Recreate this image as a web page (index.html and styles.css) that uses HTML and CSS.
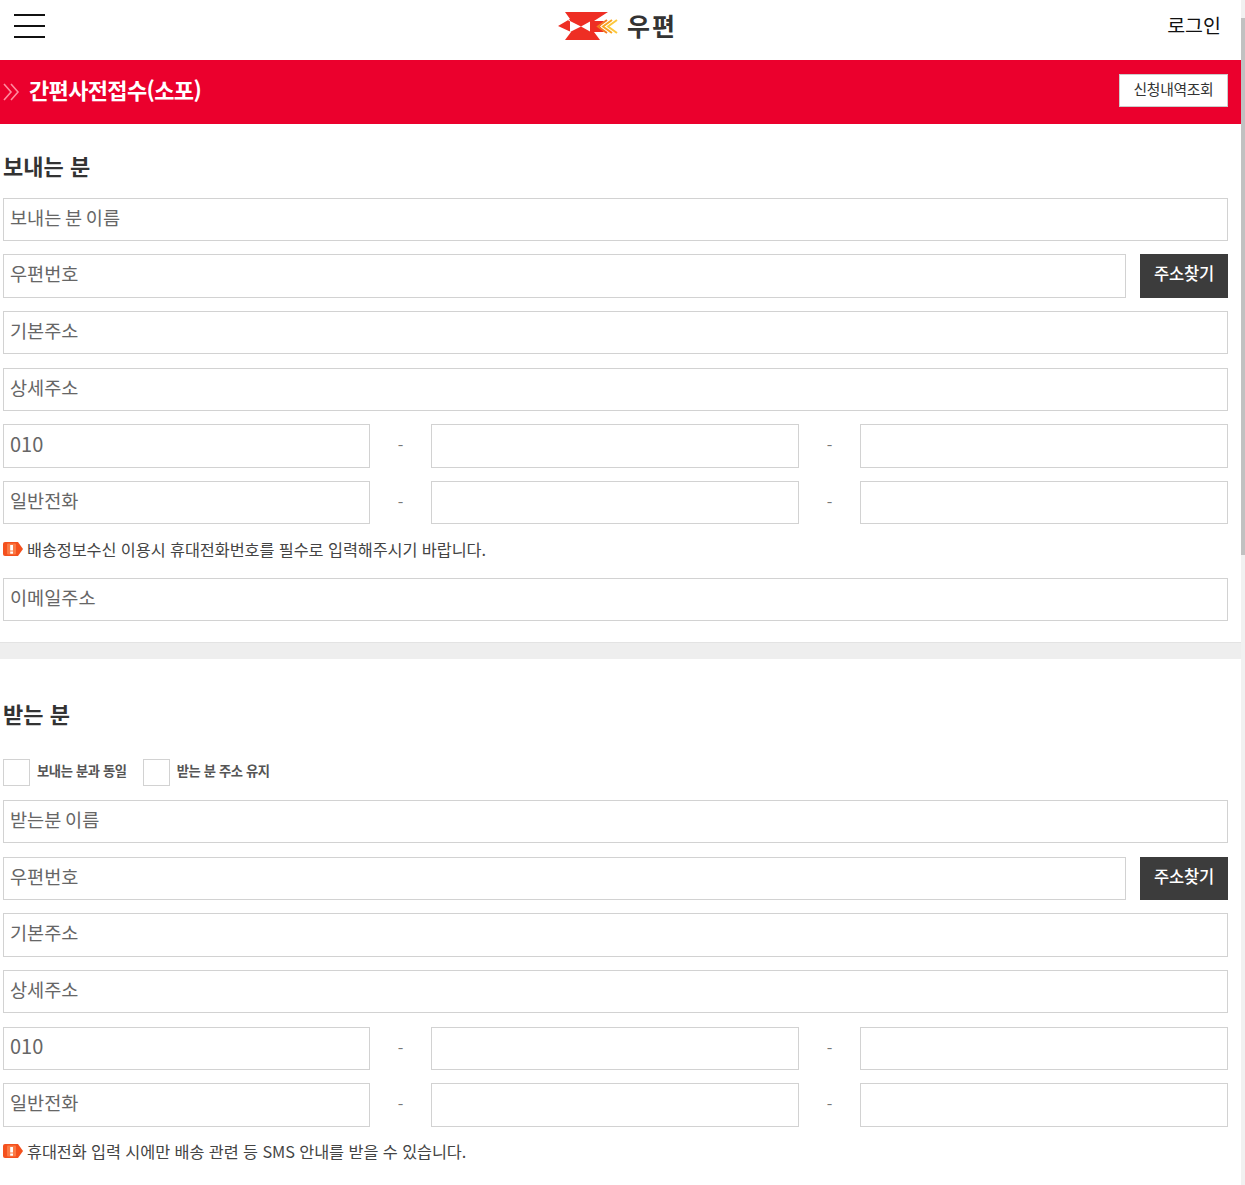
FILE: index.html
```html
<!DOCTYPE html>
<html lang="ko">
<head>
<meta charset="utf-8">
<title>간편사전접수(소포)</title>
<link rel="stylesheet" href="styles.css">
</head>
<body>
<div class="page">
  <header class="top">
    <div class="burger"><span></span><span></span><span></span></div>
    <div class="logo">
      <svg width="62" height="30" viewBox="0 0 62 30">
        <path d="M8 1 H51 L37 10 H47 L43 15.500 L47 21 H37 L43 29 H8 L14 21 L1 15 L13 8 Z" fill="#ee2e24"/>
        <path d="M13 10 L24 15.500 L13 21 Z M24 15.500 L33 10.500 V20.500 Z" fill="#fff"/>
        <path d="M7 6 L13 10 M7 24 L13 21" stroke="#fff" stroke-width="1"/>
        <path d="M50 9 L41 15.500 L50 22" fill="none" stroke="#f47b20" stroke-width="2"/>
        <path d="M55 9 L46 15.500 L55 22" fill="none" stroke="#f9a51f" stroke-width="2"/>
        <path d="M60 9 L51 15.500 L60 22" fill="none" stroke="#fcc83c" stroke-width="2"/>
      </svg>
      <span class="logo-text">우편</span>
    </div>
    <a class="login">로그인</a>
  </header>

  <div class="banner">
    <div class="banner-title">
      <svg class="chev" width="17" height="18" viewBox="0 0 17 18"><path d="M1 1 L8 9 L1 17 M8 1 L15 9 L8 17" fill="none" stroke="#ff8a9e" stroke-width="1.6"/></svg>
      <h1>간편사전접수(소포)</h1>
    </div>
    <a class="history">신청내역조회</a>
  </div>

  <section class="sect sender">
    <h2>보내는 분</h2>
    <div class="form">
      <input class="field" placeholder="보내는 분 이름">
      <div class="addr"><input class="field" placeholder="우편번호"><button class="find">주소찾기</button></div>
      <input class="field" placeholder="기본주소">
      <input class="field" placeholder="상세주소">
      <div class="tel"><input class="field num" value="010"><span class="dash">-</span><input class="field"><span class="dash">-</span><input class="field"></div>
      <div class="tel"><input class="field" placeholder="일반전화"><span class="dash">-</span><input class="field"><span class="dash">-</span><input class="field"></div>
      <p class="note">
        <svg width="20" height="16" viewBox="0 0 20 16"><path d="M2 1 H15 L20 8 L15 15 H2 Q0 15 0 13 V3 Q0 1 2 1 Z" fill="#f4511e"/><rect x="4" y="2.500" width="9" height="11" rx="1" fill="#fb7a45"/><rect x="7.200" y="4" width="2.800" height="5.500" fill="#fff"/><rect x="7.200" y="10.500" width="2.800" height="2.200" fill="#fff"/></svg>
        배송정보수신 이용시 휴대전화번호를 필수로 입력해주시기 바랍니다.
      </p>
      <input class="field" placeholder="이메일주소">
    </div>
  </section>

  <div class="band"></div>

  <section class="sect receiver">
    <h2>받는 분</h2>
    <div class="checks">
      <label class="check"><span class="box"></span>보내는 분과 동일</label>
      <label class="check"><span class="box"></span>받는 분 주소 유지</label>
    </div>
    <div class="form">
      <input class="field" placeholder="받는분 이름">
      <div class="addr"><input class="field" placeholder="우편번호"><button class="find">주소찾기</button></div>
      <input class="field" placeholder="기본주소">
      <input class="field" placeholder="상세주소">
      <div class="tel"><input class="field num" value="010"><span class="dash">-</span><input class="field"><span class="dash">-</span><input class="field"></div>
      <div class="tel"><input class="field" placeholder="일반전화"><span class="dash">-</span><input class="field"><span class="dash">-</span><input class="field"></div>
      <p class="note">
        <svg width="20" height="16" viewBox="0 0 20 16"><path d="M2 1 H15 L20 8 L15 15 H2 Q0 15 0 13 V3 Q0 1 2 1 Z" fill="#f4511e"/><rect x="4" y="2.500" width="9" height="11" rx="1" fill="#fb7a45"/><rect x="7.200" y="4" width="2.800" height="5.500" fill="#fff"/><rect x="7.200" y="10.500" width="2.800" height="2.200" fill="#fff"/></svg>
        휴대전화 입력 시에만 배송 관련 등 SMS 안내를 받을 수 있습니다.
      </p>
    </div>
  </section>
</div>
<div class="scrollbar"><div class="thumb"></div></div>
</body>
</html>
```

FILE: styles.css
```css
* { box-sizing: border-box; }
html, body { margin: 0; padding: 0; height: 100%; overflow: hidden; background: #fff; }
body { font-family: "Noto Sans CJK KR", "Noto Sans", sans-serif; color: #444; }
.page { width: 1241px; }

.top { height: 60px; display: flex; align-items: center; justify-content: space-between; position: relative; padding: 0 20px 8px 14px; }
.burger { width: 31px; height: 24px; display: flex; flex-direction: column; justify-content: space-between; }
.burger span { display: block; height: 2px; background: #111; }
.logo { position: absolute; left: 557px; top: 11px; display: flex; align-items: center; gap: 8px; }
.logo-text { font-size: 25px; font-weight: 700; color: #333; line-height: 30px; letter-spacing: 2px; margin-top: -2px; }
.login { font-size: 19.5px; color: #111; line-height: 26px; margin-top: -3px; }

.banner { height: 64px; background: #eb002d; display: flex; align-items: center; justify-content: space-between; padding: 0 13px 4px 3px; }
.banner-title { display: flex; align-items: center; gap: 9px; }
.chev { margin-top: 3px; }
.banner-title h1 { margin: -2px 0 0; font-size: 22px; font-weight: 700; color: #fff; letter-spacing: -0.65px; line-height: 30px; }
.history { width: 109px; height: 33px; background: #fff; border: 1px solid #ccc; font-size: 14.8px; color: #333; display: flex; align-items: center; justify-content: center; letter-spacing: -0.3px; padding-bottom: 3px; }

.sect { padding: 0 13px 0 3px; }
.sect h2 { margin: 0; font-size: 22px; font-weight: 700; color: #333; line-height: 32px; letter-spacing: 0; }
.sender h2 { padding-top: 24.500px; height: 73.600px; }
.receiver h2 { padding-top: 38px; height: 98px; }

.form { display: flex; flex-direction: column; gap: 13.4px; }
.field { display: block; width: 100%; height: 43.3px; min-width: 0; border: 1px solid #d2d2d2; background: #fff; padding: 0 6px 6px; font: 400 18.6px "Noto Sans CJK KR", sans-serif; word-spacing: -1.5px; color: #666; outline: 0; border-radius: 0; margin: 0; }
.field::placeholder { color: #666; opacity: 1; }
.num { font-size: 20px; padding-bottom: 5px; }
.addr { display: flex; gap: 14px; }
.find { flex: 0 0 88px; height: 43.3px; border: 0; background: #3c3c3c; color: #fff; font: 500 16.5px "Noto Sans CJK KR", sans-serif; padding: 0 0 5px; letter-spacing: -0.2px; }
.tel { display: grid; grid-template-columns: 367px 61px 368px 61px 368px; }
.dash { text-align: center; font-size: 16px; color: #777; line-height: 43px; }

.note { margin: -4px 0 0.7px; height: 30px; display: flex; align-items: center; gap: 4px; font-size: 16.3px; color: #444; letter-spacing: -0.08px; line-height: 24px; }
.band { height: 17px; margin-top: 20.800px; background: #eee; border-top: 1px solid #e3e3e3; }

.checks { display: flex; gap: 16px; height: 27px; margin-top: 2px; margin-bottom: 14px; }
.check { display: flex; align-items: center; gap: 7px; font-size: 13.300px; font-weight: 700; color: #555; letter-spacing: -0.38px; padding-bottom: 3px; }
.box { width: 27px; height: 27px; border: 1px solid #d2d2d2; background: #fff; margin-bottom: -3px; }

.scrollbar { position: absolute; top: 0; right: 0; width: 4px; height: 1185px; background: #f1f1f1; }
.thumb { position: absolute; top: 18px; left: 0; width: 4px; height: 537px; background: #c1c1c1; }
```
